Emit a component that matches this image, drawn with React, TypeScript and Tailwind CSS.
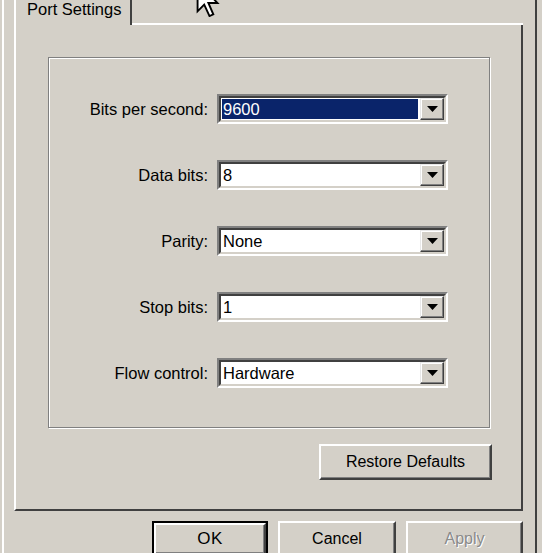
import React from 'react';

const rows = [
    { label: 'Bits per second:', value: '9600', selected: true },
    { label: 'Data bits:', value: '8' },
    { label: 'Parity:', value: 'None' },
    { label: 'Stop bits:', value: '1' },
    { label: 'Flow control:', value: 'Hardware' },
];

const raised =
    'border-2 border-t-white border-l-white border-b-[#404040] border-r-[#404040] shadow-[inset_-1px_-1px_0_#808080]';

const Combo: React.FC<{ value: string; selected?: boolean }> = ({ value, selected }) => (
    <div className="ml-[9px] w-[231px] h-[30px] border-2 border-t-[#808080] border-l-[#808080] border-b-white border-r-white">
        <div className="h-full flex items-stretch border-2 border-t-[#404040] border-l-[#404040] border-b-[#d4d0c8] border-r-[#d4d0c8] bg-white">
            <div className="flex-1 flex items-stretch p-[1px] pr-[2px]">
                <div
                    className={`flex-1 flex items-center pl-[1px] text-[16.5px] leading-none ${
                        selected ? 'bg-[#0a246a] text-white' : 'text-black'
                    }`}
                >
                    {value}
                </div>
            </div>
            <div className="w-[24px] flex items-center justify-center bg-[#d4d0c8] border border-t-[#e8e8e8] border-l-[#e8e8e8] border-b-[#404040] border-r-[#404040] shadow-[inset_-1px_-1px_0_#808080,inset_1px_1px_0_#fff]">
                <svg width="11" height="6" viewBox="0 0 11 6">
                    <path d="M0 0 H11 L5.5 6 Z" fill="#000" />
                </svg>
            </div>
        </div>
    </div>
);

export default function App() {
    return (
        <div className="relative w-[542px] h-[553px] overflow-hidden bg-[#d4d0c8] text-black font-['Liberation_Sans',Arial,sans-serif]">
            <div className="ml-[2px] w-[535px] h-full border-l-2 border-l-white border-r-2 border-r-[#404040] pl-[10px]">
                <div className="w-[509px]">
                    {/* tab strip */}
                    <div className="flex h-[25px]">
                        <div className="w-[118px] border-l-2 border-l-white border-r-2 border-r-[#404040] pl-[11px] text-[16.5px] leading-[19px]">
                            Port Settings
                        </div>
                        <div className="flex-1 border-b-2 border-b-white" />
                    </div>

                    {/* tab page */}
                    <div className="h-[486px] border-l-2 border-l-white border-r-2 border-r-[#404040] border-b-2 border-b-[#404040] pt-[32px] pl-[32px]">
                        <div className="w-[442px] h-[371px] border border-[#808080] shadow-[inset_1px_1px_0_#fff,1px_1px_0_#fff] pt-[36px] flex flex-col gap-[36px]">
                            {rows.map((r) => (
                                <div key={r.label} className="flex items-center h-[30px]">
                                    <div className="w-[159px] text-right text-[16.5px] leading-none">{r.label}</div>
                                    <Combo value={r.value} selected={r.selected} />
                                </div>
                            ))}
                        </div>
                        <div className="w-[444px] mt-[16px] flex justify-end">
                            <button className={`w-[173px] h-[36px] bg-[#d4d0c8] text-[16px] ${raised}`}>
                                Restore Defaults
                            </button>
                        </div>
                    </div>

                    {/* dialog buttons */}
                    <div className="mt-[10px] flex justify-end gap-[10px]">
                        <div className="w-[116px] h-[36px] border-2 border-black">
                            <button className={`w-full h-full bg-[#d4d0c8] text-[17px] tracking-[0.5px] ${raised}`}>OK</button>
                        </div>
                        <button className={`w-[118px] h-[36px] bg-[#d4d0c8] text-[16px] ${raised}`}>Cancel</button>
                        <button
                            className={`w-[117px] h-[36px] bg-[#d4d0c8] text-[16px] text-[#8a8a8a] [text-shadow:1px_1px_0_#fff] ${raised}`}
                        >
                            Apply
                        </button>
                    </div>
                </div>
            </div>

            {/* mouse pointer */}
            <svg className="absolute left-[196px] top-[-19px]" width="24" height="36" viewBox="0 0 12 19">
                <path
                    d="M0.5 0.5 V16 L4 12.5 L6.8 18.5 L8.8 17.6 L6.2 11.6 L11 11.6 Z"
                    fill="#fff"
                    stroke="#000"
                    strokeWidth="1"
                    strokeLinejoin="miter"
                />
            </svg>
        </div>
    );
}
